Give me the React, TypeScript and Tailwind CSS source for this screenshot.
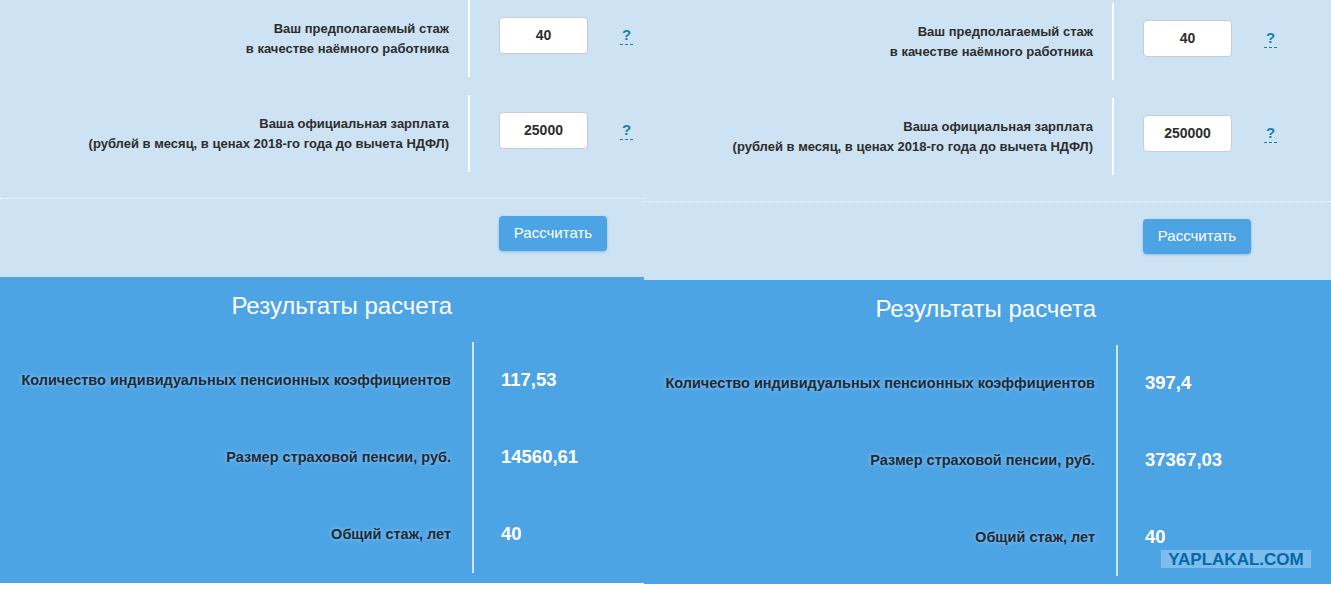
import React from "react";

type FieldRowProps = {
  lines: string[];
  value: string;
};

const FieldRow = ({ lines, value }: FieldRowProps) => (
  <div className="flex h-[77px]">
    <div className="w-[468px] pr-[19px] flex flex-col items-end justify-center text-right text-[13px] font-bold leading-[20px] text-[#2d2d2d]">
      {lines.map((line, index) => (
        <span key={index}>{line}</span>
      ))}
    </div>
    <div className="w-[2px] bg-white" />
    <div className="flex items-center pl-[29px] pb-[7px]">
      <div className="w-[89px] h-[37px] rounded-[4px] border border-[#c8ccd0] bg-white flex items-center justify-center text-[14px] font-bold text-[#2d2d2d]">
        {value}
      </div>
      <span className="ml-[32px] mt-[2px] px-[2px] pb-[1px] border-b border-dashed border-[#1a7fa5] text-[15px] font-bold leading-[16px] text-[#1a7fa5]">
        ?
      </span>
    </div>
  </div>
);

type ResultRowProps = {
  label: string;
  value: string;
};

const ResultRow = ({ label, value }: ResultRowProps) => (
  <div className="flex h-[77px]">
    <div className="w-[472px] pr-[21px] flex items-center justify-end text-right text-[14.5px] font-bold text-[#1c2a38] [text-shadow:0_0_4px_rgba(255,255,255,0.45)]">
      {label}
    </div>
    <div className="w-[2px] bg-[#cfe6f8]" />
    <div className="flex items-center pl-[27px] pb-[2px] text-[18.5px] font-bold text-white">
      {value}
    </div>
  </div>
);

type PanelProps = {
  salary: string;
  coeff: string;
  pension: string;
  shifted?: boolean;
};

const Panel = ({ salary, coeff, pension, shifted }: PanelProps) => (
  <div
    className={
      shifted
        ? "relative flex-1 h-[584px] overflow-hidden bg-[#cde3f4] pt-[3px]"
        : "relative w-[644px] h-[583px] overflow-hidden"
    }
  >
    {/* Input form */}
    <div className="bg-[#cde3f4] h-[277px]">
      <div className="flex flex-col gap-[18px]">
        <FieldRow
          lines={["Ваш предполагаемый стаж", "в качестве наёмного работника"]}
          value="40"
        />
        <FieldRow
          lines={[
            "Ваша официальная зарплата",
            "(рублей в месяц, в ценах 2018-го года до вычета НДФЛ)",
          ]}
          value={salary}
        />
      </div>
      <div className="mt-[26px] border-t border-dotted border-white pt-[17px] pl-[499px]">
        <button className="w-[108px] h-[35px] rounded-[4px] bg-[#4da4e5] shadow-[0_1px_3px_rgba(40,110,170,0.35)] text-[15px] text-white">
          Рассчитать
        </button>
      </div>
    </div>

    {/* Results */}
    <div className="bg-[#4da4e5] h-[306px] pt-[16px]">
      <div className="w-[452px] text-right text-[24px] leading-[26px] text-white">
        Результаты расчета
      </div>
      <div className="mt-[23px] flex flex-col">
        <ResultRow
          label="Количество индивидуальных пенсионных коэффициентов"
          value={coeff}
        />
        <ResultRow label="Размер страховой пенсии, руб." value={pension} />
        <ResultRow label="Общий стаж, лет" value="40" />
      </div>
    </div>

    {/* site watermark */}
    {shifted && (
      <div className="absolute left-[517px] top-[550px] w-[150px] h-[18px] bg-[#7dbcec] flex items-center justify-center text-sky-700">
        <span className="text-[17px] font-black leading-none tracking-normal">
          YAPLAKAL.COM
        </span>
      </div>
    )}
  </div>
);

export default function App() {
  return (
    <div className="flex items-start w-[1331px] h-[589px] bg-white overflow-hidden font-['Liberation_Sans',Arial,sans-serif]">
      <Panel salary="25000" coeff="117,53" pension="14560,61" />
      <Panel salary="250000" coeff="397,4" pension="37367,03" shifted />
    </div>
  );
}
